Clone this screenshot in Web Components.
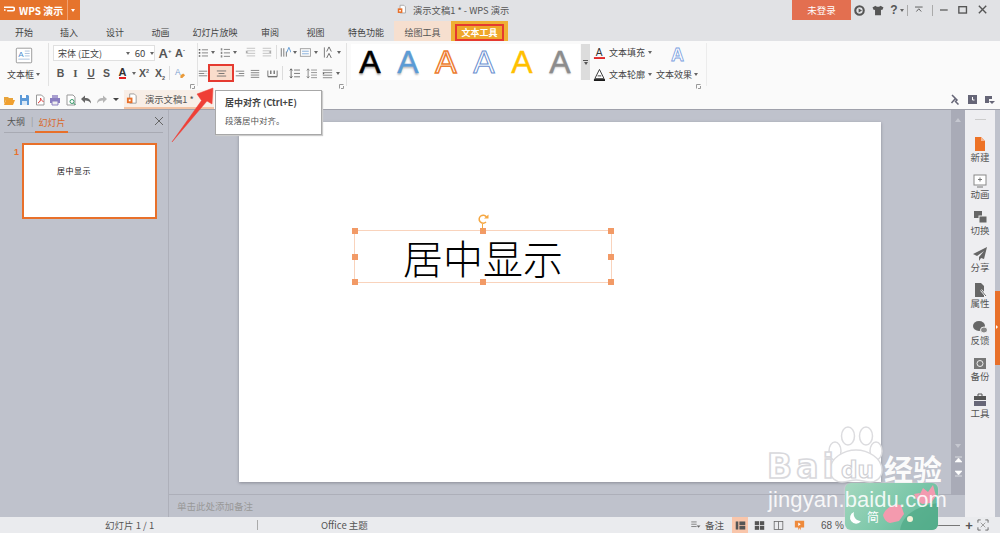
<!DOCTYPE html>
<html lang="zh"><head><meta charset="utf-8"><title>WPS 演示</title>
<style>html,body{margin:0;padding:0;overflow:hidden;background:#bfc2cc;font-family:"Noto Sans CJK SC","Liberation Sans",sans-serif}</style>
</head><body>
<wps-app></wps-app>
<script>
const F='"Noto Sans CJK SC","Liberation Sans",sans-serif';
const L=(ys,x1,x2,c='#666')=>ys.map(y=>`<path d="M${x1} ${y}H${x2}" stroke="${c}"/>`).join('');
const ICONS={
 folder:`<path d="M1 3h4l1 1h4v2H3L1 10z" fill="#e8a33a"/><path d="M3 6h9l-2 5H1z" fill="#f0a030"/>`,
 save:`<path d="M2 1h8l1 1v9H2z" fill="#5d9ad8"/><path d="M4 1h4v3H4z" fill="#fff"/><path d="M4 7h5v4H4z" fill="#dbe8f5"/>`,
 pdf:`<path d="M2.5 1h5l2.500 2.500v7.500h-7.500z" fill="#fff" stroke="#999"/><path d="M4 9c2-1 3-3 2.500-5 .5 2 1.500 3 3 3.500" fill="none" stroke="#d33"/>`,
 print:`<path d="M3 1h6v3H3z" fill="#a99fd0"/><path d="M1 4h10v5H1z" fill="#8a7fc0"/><path d="M3 7h6v4H3z" fill="#eee" stroke="#8a7fc0"/>`,
 preview:`<path d="M2 1h6l2 2v8H2z" fill="#fff" stroke="#999"/><circle cx="7" cy="7.500" r="2" fill="#fff" stroke="#3a9a6a"/><path d="M8.500 9l2 2" stroke="#3a9a6a"/>`,
 undo:`<path d="M1 5l4-3.500V4c4 0 6 2 6 5.500C10 7.500 8 6.500 5 6.500V9z" fill="#666"/>`,
 redo:`<path d="M11 5L7 1.500V4C3 4 1 6 1 9.500 2 7.500 4 6.500 7 6.500V9z" fill="#b5b5b5"/>`,
 doc:`<path d="M4 1h5l2 2v8H4z" fill="#fff" stroke="#999"/><rect x="1" y="5" width="6" height="6" fill="#e8702a"/><path d="M3 7h2v2H3z" fill="#fff"/>`,
 left:L([3.500,6.500,9.500],1,12)+`<path d="M8 6.500h4" stroke="#fafafa"/>`,
 center:L([3.500,9.500],1,12)+L([6.500],3,10),
 right:L([3.500,9.500],1,12)+L([6.500],5,12),
 just:L([2.500,5.500,8.500,11.500],1,12),
 dist:`<path d="M1 3v7h11V3" fill="none" stroke="#666"/><path d="M1 10.500h11" stroke="#666"/><path d="M4.500 3v4M8.500 3v4" stroke="#666" stroke-width="1.500"/>`,
 bullet:`<path d="M1 2h2v2H1zM1 6h2v2H1zM1 10h2v2H1z" fill="#666"/>`+L([3,7,11],5,13),
 number:`<path d="M1 1h2v3H1zM1 5.500h2v3H1zM1 10h2v3H1z" fill="#888"/>`+L([2.500,7,11.500],5,13),
 out:L([1.500,4.500,7.500,10.500],2,12,'#bbb')+`<path d="M1 4l3 2-3 2z" fill="#aaa"/>`,
 in:L([1.500,4.500,7.500,10.500],2,12,'#bbb')+`<path d="M12 4L9 6l3 2z" fill="#aaa"/>`,
 cols:`<path d="M1.500 2v10M4.500 2v10M7.500 6v6" stroke="#666"/><path d="M8 7l2.500-6 2.500 6" fill="none" stroke="#4f8fd0"/>`,
 vcenter:`<rect x="1" y="2" width="12" height="9" fill="none" stroke="#999"/><path d="M3 5h8M3 8h8" stroke="#7aa7d8"/>`,
 dir:`<path d="M1.500 1.500v11" stroke="#777"/><path d="M4 6l2.500-5L9 6M4 13l2.500-5L9 13" fill="none" stroke="#666"/>`,
 lead:`<path d="M2.500 2v10M1 3.500l1.500-2 1.500 2M1 10.500l1.500 2 1.500-2" fill="none" stroke="#555"/>`+L([3,7,11],6,13),
 before:`<path d="M2.500 2v10M1 3.500l1.500-2 1.500 2M1 10.500l1.500 2 1.500-2" fill="none" stroke="#777"/>`+L([3,6,9,12],6,13,'#888'),
 after:L([2.500,5.500,8.500,11.500],1,12,'#777')+`<path d="M1 5l2 1.500L1 8z" fill="#666"/>`,
 erase:`<text x="1" y="9" font-size="9" font-family="Liberation Sans" fill="#7ba0d0">A</text><path d="M7 9l3-2 2 2-3 3H7z" fill="#e99a3a"/>`,
 box:`<rect x="1.500" y="1.500" width="19" height="18" rx="1" fill="#fff" stroke="#888"/><text x="4" y="12" font-size="10" font-family="Liberation Sans" fill="#4f8fd0">A</text><path d="M12 5h6M12 8h6M12 11h6M4 15h14" stroke="#9db7d8"/>`,
 file:`<path d="M2 0h6l4 4v10H2z" fill="#ed7226"/><path d="M8 0v4h4" fill="#f7b690"/>`,
 anim:`<rect x="1" y="1" width="12" height="10" fill="#fff" stroke="#888"/><path d="M7 3.500v4M5 5.500h4M4 13h6" stroke="#777"/>`,
 swap:`<rect x="1" y="1" width="8" height="7" fill="#666"/><rect x="6" y="6" width="8" height="7" fill="#666" stroke="#eee"/>`,
 share:`<path d="M14 0L0 7l4 2 7-5-5 6v4l2-3 3 1z" fill="#666"/>`,
 prop:`<path d="M2 0h6l3 3v11H2z" fill="#666"/><path d="M8 7l5 6" stroke="#fff" stroke-width="2"/><path d="M8 7l5 6" stroke="#666"/>`,
 chat:`<ellipse cx="6" cy="6" rx="6" ry="5" fill="#666"/><ellipse cx="11" cy="10" rx="3.500" ry="3" fill="#888" stroke="#eee"/>`,
 backup:`<rect x="1" y="2" width="12" height="11" fill="#777"/><circle cx="7" cy="7.500" r="3" fill="none" stroke="#eee"/>`,
 tool:`<path d="M5 3V1h4v2" fill="none" stroke="#555"/><rect x="1" y="3" width="12" height="4" fill="#555"/><rect x="1" y="8" width="12" height="5" fill="#667"/>`,
 notes:L([2.500,5.500,8.500],1,8,'#666')+`<path d="M8 7h5l-2.500 3z" fill="#666"/>`,
 normal:`<rect x="1" y="1" width="3.500" height="11" fill="#555"/><rect x="6" y="1" width="8" height="5" fill="#555"/><rect x="6" y="7" width="8" height="5" fill="#555"/>`,
 sorter:`<rect x="1" y="1" width="5.500" height="5" fill="#555"/><rect x="7.500" y="1" width="5.500" height="5" fill="#555"/><rect x="1" y="7" width="5.500" height="5" fill="#555"/><rect x="7.500" y="7" width="5.500" height="5" fill="#555"/>`,
 reading:`<rect x="1.500" y="1.500" width="11" height="10" fill="none" stroke="#666"/><path d="M7 1.500v10" stroke="#666"/>`,
 play:`<path d="M1 1h11v8H8v3L6.500 9.500 5 12V9H1z" fill="#ee8a3c"/><path d="M5 3l3 2-3 2z" fill="#fff"/>`,
 fit:`<path d="M1 4V1h3M9 1h3v3M12 9v3H9M4 12H1V9" fill="none" stroke="#666"/><path d="M4 4l5 5M9 4L4 9" stroke="#999"/>`,
 store:`<circle cx="6.500" cy="6.500" r="5" fill="none" stroke="#555" stroke-width="2.500"/><path d="M5.500 4l4 2.500-4 2.500z" fill="#555"/>`,
 shirt:`<path d="M3.500 1L0 3l1.500 3L3 5.500V12h7V5.500l1.500.5L13 3 9.500 1c-1 1.500-5 1.500-6 0z" fill="#555"/>`,
 collapse:`<path d="M0 1.500h11M2 8l3.500-4L9 8" fill="none" stroke="#555" stroke-width="1.300"/>`,
 min:`<path d="M0 6.500h10" stroke="#555" stroke-width="1.600"/>`,
 max:`<rect x="1" y="2" width="9" height="7.500" fill="none" stroke="#555" stroke-width="1.600"/>`,
 close:`<path d="M2 2l8 8M10 2l-8 8" stroke="#555" stroke-width="1.500"/>`,
 x:`<path d="M1 1l8 8M9 1L1 9" stroke="#666"/>`,
 pin:`<path d="M2 1l5 5-1.500 1.500 3 3M5 5L1.500 9" stroke="#667" stroke-width="1.500" fill="none"/>`,
 clock:`<rect x="0" y="0" width="9" height="9" fill="#667"/><path d="M4.500 2v3h2" stroke="#fff" fill="none"/>`,
 qdrop:`<path d="M0 0h7v3H4v4H0z" fill="#667"/><path d="M4 5h6L7 8z" fill="#667"/>`,
 fa:`<text x="3" y="10" font-size="11" font-family="Liberation Sans" fill="#333">A</text><path d="M1 12.500h12" stroke="#e02020" stroke-width="2"/>`,
 oa:`<path d="M7 1l5 10H2z" fill="#fff" stroke="#333"/><path d="M5 8h4" stroke="#333"/><path d="M1 12.500h12" stroke="#111" stroke-width="2"/>`,
};
class WpsIcon extends HTMLElement{connectedCallback(){const w=+this.getAttribute('w')||13,h=+this.getAttribute('h')||w,vb=this.getAttribute('vb')||'0 0 13 13';
 this.attachShadow({mode:'open'}).innerHTML=`<style>:host{display:inline-flex;flex:none}svg{display:block}</style><svg width="${w}" height="${h}" viewBox="${vb}">${ICONS[this.getAttribute('name')]||''}</svg>`}}
customElements.define('wps-icon',WpsIcon);

class WpsCell extends HTMLElement{connectedCallback(){const w=this.getAttribute('w')||16;
 this.attachShadow({mode:'open'}).innerHTML=`<style>:host{display:flex;flex:none;width:${w}px;height:100%;align-items:center;justify-content:center;color:#444;white-space:nowrap}</style><slot></slot>`}}
customElements.define('wps-cell',WpsCell);

const I=(n,w,h,vb)=>`<wps-icon name="${n}"${w?` w="${w}"`:''}${h?` h="${h}"`:''}${vb?` vb="${vb}"`:''}></wps-icon>`;
const C=(w,c='',st='')=>`<wps-cell w="${w}"${st?` style="${st}"`:''}>${c}</wps-cell>`;
const D=(w=7)=>C(w,'<span style="border-top:3px solid #666;border-left:2px solid transparent;border-right:2px solid transparent"></span>');
const S=(w=1,h=15)=>`<wps-cell w="${w}"><span style="display:block;width:1px;height:${h}px;background:#dcdcdc"></span></wps-cell>`;

class WpsTitle extends HTMLElement{connectedCallback(){this.attachShadow({mode:'open'}).innerHTML=`<style>
:host{display:flex;height:21px;background:#e1e2e5;align-items:stretch;color:#555;font:9.300px ${F}}
.logo{width:80px;height:20px;background:#e6742c;color:#fff;display:flex;align-items:center;font-size:10px;font-weight:700;white-space:nowrap;flex:none}
.logo svg{margin:0 4px 0 4px;flex:none}.logo span{width:48px}.logo b{border-left:1px solid #f0a070;height:20px;width:9px;position:relative;flex:none}
.logo b::after{content:"";position:absolute;left:3px;top:9px;border-top:3px solid #fff;border-left:2px solid transparent;border-right:2px solid transparent}
.t{margin-left:317px;display:flex;align-items:center;gap:6px;width:395px;padding-bottom:2px;white-space:nowrap}
.login{width:59px;height:20px;background:#e36f50;color:#fff;display:flex;align-items:center;justify-content:center;font-size:9.500px}
.r{display:flex;align-items:center;height:20px}
.q{font:bold 12px "Liberation Sans";color:#555}.sep{width:1px;height:11px;background:#aaa}
</style>
<div class="logo"><svg width="11" height="10" viewBox="0 0 14 10"><path d="M0 1.500h11c3 0 3 4.500 0 4.500H4M0 5h2" fill="none" stroke="#fff" stroke-width="2"/></svg><span>WPS 演示</span><b></b></div>
<div class="t">${I('doc',10,11)}<span>演示文稿1 * - WPS 演示</span></div>
<div class="login">未登录</div>
<div class="r">${C(2)}
${C(13,I('store',11,11))}${C(5)}${C(13,I('shirt',12,11))}${C(6)}${C(8,'<span class="q">?</span>')}${D(7)}${C(2)}<span class="sep"></span>${C(5)}${C(13,I('collapse',11,9))}${C(6)}<span class="sep"></span>${C(7)}${C(10,I('min',10,10))}${C(8)}${C(10,I('max',11,11))}${C(10)}${C(10,I('close',12,12))}</div>`}}
customElements.define('wps-title',WpsTitle);

class WpsTabs extends HTMLElement{connectedCallback(){
 const t=[['开始',44],['插入',46],['设计',46],['动画',45],['幻灯片放映',64],['审阅',46],['视图',45],['特色功能',56]];
 this.attachShadow({mode:'open'}).innerHTML=`<style>
:host{display:flex;height:20px;background:#e1e2e5;color:#444;font:9px ${F};padding-left:2px}
span{display:flex;align-items:center;justify-content:center;flex:none;padding-top:2px;box-sizing:border-box}
.draw{background:#f6dfcf;width:57px;color:#555}
.text{background:#efb034;width:57px;padding:3px 4px 0}
.text i{font-style:normal;font-weight:700;flex:1;height:100%;display:flex;align-items:center;justify-content:center;background:#efa72a;color:#fff;border:2px solid #e53a30;box-sizing:border-box}
</style>${t.map(x=>`<span style="width:${x[1]}px">${x[0]}</span>`).join('')}<span class="draw">绘图工具</span><span class="text"><i>文本工具</i></span>`}}
customElements.define('wps-tabs',WpsTabs);

class WpsRibbon extends HTMLElement{connectedCallback(){
 const A=(st)=>`<span style="font:32px 'Liberation Sans';width:38px;text-align:center;line-height:36px;${st}">A</span>`;
 const launcher=`<svg class="la" width="5" height="5" viewBox="0 0 5 5"><path d="M.5 4.500v-4h4M4.500 2v2.500H2" fill="none" stroke="#999"/></svg>`;
 this.attachShadow({mode:'open'}).innerHTML=`<style>
:host{display:flex;height:49px;background:#fafafa;font:9px ${F};color:#444;position:relative}
.g{flex:none;display:flex;flex-direction:column;position:relative;height:100%;box-sizing:border-box;white-space:nowrap}
.row{display:flex;height:20px;align-items:center}
.sep{flex:none;width:1px;height:43px;margin-top:2px;background:#e2e2e2}
.la{position:absolute;right:2px;bottom:1px}
.combo{display:flex;height:16px;border:1px solid #e0e0e0;box-sizing:border-box;background:#fff;align-items:center;flex:none}
.boxg{align-items:center;padding-top:6px}
.let{font:bold 10px "Liberation Sans";color:#555}
.gal{flex:none;display:flex;width:229px;height:36px;background:#fff;margin:3px 0 0 4px}
.scr{flex:none;width:9px;height:36px;background:#dcdcdc;margin:3px 0 0 1px;display:flex;align-items:center;justify-content:center;flex-direction:column;gap:1px}
.scr i{display:block}
</style>
<div class="g boxg" style="width:48px">
 ${I('box',18,17,'0 0 22 21')}
 <div style="display:flex;align-items:center;height:18px;margin-top:1px">文本框${D(7)}</div>
</div><div class="sep"></div>
<div class="g" style="width:148px;padding:2px 0 0 4px">
 <div class="row">
  <div class="combo" style="width:102px">${C(71,'宋体 (正文)','justify-content:flex-start;padding-left:4px;box-sizing:border-box')}${D(6)}<span style="width:1px;height:14px;background:#e0e0e0"></span>${C(18,'60','font-size:9.500px')}${D(6)}</div>
  ${C(2)}${C(16,'<span class="let" style="font-size:13px">A<sup style="font-size:6px">+</sup></span>')}${C(14,'<span class="let" style="font-size:11px">A<sup style="font-size:6px">-</sup></span>')}
 </div>
 <div class="row">
  ${C(15,'<span class="let" style="font-size:10.500px">B</span>')}${C(15,'<i class="let" style="font-family:Liberation Serif;font-size:11px">I</i>')}${C(16,'<u class="let" style="font-size:10px">U</u>')}${C(15,'<span class="let" style="font-size:10.500px">S</span>')}
  ${C(17,'<span class="let" style="font-size:11px;border-bottom:2px solid #e02020;line-height:10px;color:#333">A</span>')}${D(6)}
  ${C(14,'<span class="let" style="font-size:10.500px">X<sup style="font-size:5.500px;line-height:0">2</sup></span>')}${C(18,'<span class="let" style="font-size:10.500px">X<sub style="font-size:5.500px;line-height:0">2</sub></span>')}
  ${S(1,14)}${C(20,I('erase',12,12))}
 </div>
 ${launcher}
</div><div class="sep"></div>
<div class="g" style="width:148px;padding:1px 0 0 0">
 <div class="row">
  ${C(10,I('bullet',10,11))}${D(10)}${C(14,I('number',10,11))}${D(6)}${C(5)}${C(14,I('out',11,11))}${C(18,I('in',11,11))}${S(3,14)}${C(14,I('cols',11,12))}${D(6)}${C(14,I('vcenter',12,11))}${D(8)}${C(2)}${C(14,I('dir',12,12))}${D(6)}
 </div>
 <div class="row" style="margin-top:1px">
  ${C(10,I('left',10,11))}
  <wps-cell w="26" style="box-sizing:border-box;height:18px;border:2px solid #e53a30;background:#f9dccb">${I('center',11,11)}</wps-cell>
  ${C(11,I('right',10,11))}${C(20,I('just',10,11))}${C(14,I('dist',11,11))}${C(3)}${S(1,14)}${C(3)}${C(16,I('lead',11,12))}${C(1)}${C(16,I('before',11,12))}${C(16,I('after',11,11))}${D(6)}
 </div>
 ${launcher}
</div><div class="sep"></div>
<div class="gal">
 ${A('color:#000;-webkit-text-stroke:.6px #000;text-shadow:0 2px 2px #aaa')}
 ${A('color:#5b9bd5;-webkit-text-stroke:.4px #5b9bd5;text-shadow:0 2px 2px #bbb')}
 ${A('color:#fff;-webkit-text-stroke:1.500px #ed7d31')}
 ${A('color:#fff;-webkit-text-stroke:1px #6a8fd0')}
 ${A('color:#ffc000;-webkit-text-stroke:.4px #ffc000')}
 ${A('color:#8c8c8c;-webkit-text-stroke:.4px #8c8c8c;text-shadow:0 1px 2px #bbb')}
</div>
<div class="scr"><i style="width:5px;height:1px;background:#555"></i><i style="border-top:3px solid #555;border-left:2.500px solid transparent;border-right:2.500px solid transparent"></i></div>
<div class="g" style="width:66px;padding:1px 0 0 3px">
 <div class="row">${I('fa',12,13)}<span style="margin-left:4px;width:36px">文本填充</span>${D(9)}</div>
 <div class="row" style="margin-top:2px">${I('oa',12,13)}<span style="margin-left:4px;width:36px">文本轮廓</span>${D(9)}</div>
</div>
<div class="g" style="width:47px;align-items:center;padding:5px 4px 0 0">
 <span style="font:bold 18px 'Liberation Sans';color:#fff;-webkit-text-stroke:.8px #7b9fe0;line-height:18px">A</span>
 <div class="row" style="margin-top:0">文本效果${D(7)}</div>
 ${launcher}
</div><div class="sep" style="margin-left:3px;background:#ececec"></div>`}}
customElements.define('wps-ribbon',WpsRibbon);

class WpsQuick extends HTMLElement{connectedCallback(){
 const names=['folder','save','pdf','print','preview','undo','redo'];
 this.attachShadow({mode:'open'}).innerHTML=`<style>
:host{display:flex;height:19px;background:#fafafa;align-items:center;font:9.300px ${F};color:#555}
.doc{display:flex;align-items:center;height:19px;width:90px;box-sizing:border-box;background:#f8eee7;border-bottom:2px solid #f3c3a4;gap:7px;padding-left:2px;flex:none}
.r{margin-left:auto;display:flex;align-items:center;gap:8px;padding-right:5px}
</style>${C(1)}${names.map(n=>C(15.500,I(n,12,12,'0 0 12 12'))).join('')}${C(2)}${C(9,'<span style="border-top:3px solid #444;border-left:3px solid transparent;border-right:3px solid transparent"></span>')}${C(3.500)}
<div class="doc">${I('doc',12,12)}<span>演示文稿1 *</span></div>
<div class="r">${I('pin',10,11,'0 0 10 11')}${I('clock',9,9,'0 0 9 9')}${I('qdrop',10,8,'0 0 10 8')}</div>`}}
customElements.define('wps-quick',WpsQuick);

class WpsSide extends HTMLElement{connectedCallback(){this.attachShadow({mode:'open'}).innerHTML=`<style>
:host{display:block;width:168px;flex:none;background:#bfc2cc;border-right:1px solid #aeb0ba;font:9px ${F};color:#555}
.tabs{display:flex;align-items:center;height:23px;margin:0 5px 0 4px;border-bottom:1px solid #a8aab3;box-sizing:border-box}
.o{color:#d9692a;height:23px;line-height:26px;border-bottom:2px solid #e8702a;padding:0 3px;margin-left:2px;box-sizing:border-box}
.th{display:flex;margin-top:10px;padding-left:14px}
.n{width:8px;font:bold 9px "Liberation Sans";color:#e8702a;padding-top:4px}
.t{width:135px;height:76px;box-sizing:border-box;border:2px solid #e8702a;background:#fff;font:8px ${F};color:#111;padding:20px 0 0 33px;letter-spacing:.5px}
</style><div class="tabs"><span style="padding-left:3px">大纲</span><span style="margin-left:6px;color:#999">|</span><span class="o">幻灯片</span><span style="margin-left:auto;margin-right:-1px;margin-top:3px">${I('x',10,10,'0 0 10 10')}</span></div>
<div class="th"><div class="n">1</div><div class="t">居中显示</div></div>`}}
customElements.define('wps-side',WpsSide);

class WpsSlide extends HTMLElement{connectedCallback(){
 const h=[[0,0],[50,0],[100,0],[0,50],[100,50],[0,100],[50,100],[100,100]];
 this.attachShadow({mode:'open'}).innerHTML=`<style>
:host{display:block;width:642px;height:360px;background:#fff;position:relative;box-shadow:0 1px 3px #8a8c96;flex:none}
.box{position:absolute;left:115px;top:108px;width:258px;height:53px;border:1px solid #f9d3bc;box-sizing:border-box;display:flex;align-items:center;justify-content:center;font:300 40px ${F};color:#000;line-height:1}
i{position:absolute;width:6px;height:6px;background:#f29a66;margin:-3px 0 0 -3px}
svg{position:absolute;left:122px;top:-18px}
</style><div class="box">居中显示${h.map(p=>`<i style="left:${p[0]}%;top:${p[1]}%"></i>`).join('')}
<svg width="12" height="18" viewBox="0 0 12 18"><path d="M9.500 4A4 4 0 1 0 9 9" fill="none" stroke="#f5a742" stroke-width="1.500"/><path d="M7 5.500h4.500V1.500z" fill="#f5a742"/><path d="M5.500 11v7" stroke="#f5a742"/></svg></div>`}}
customElements.define('wps-slide',WpsSlide);

class WpsCanvas extends HTMLElement{connectedCallback(){this.attachShadow({mode:'open'}).innerHTML=`<style>
:host{flex:1;display:flex;flex-direction:column;background:#bfc2cc;min-width:0}
.area{flex:1;padding:12px 0 0 70px;min-height:0}
.notes{height:23px;border-top:1px solid #adafb9;font:9.500px ${F};color:#999;display:flex;align-items:center;padding-left:8px;box-sizing:border-box}
</style><div class="area"><wps-slide></wps-slide></div><div class="notes">单击此处添加备注</div>`}}
customElements.define('wps-canvas',WpsCanvas);

class WpsScroll extends HTMLElement{connectedCallback(){this.attachShadow({mode:'open'}).innerHTML=`<style>
:host{display:flex;flex-direction:column;align-items:center;width:14px;flex:none;background:#a9abb7;height:385px}
i{display:block;border-left:3.500px solid transparent;border-right:3.500px solid transparent}
.w{margin-top:8px;border-bottom:4px solid #c5c7d0}.d{border-top:4px solid #c5c7d0;margin-top:322px}
svg{flex:none}
</style><i class="w"></i><i class="d"></i>
<svg style="margin-top:8px" width="7" height="7" viewBox="0 0 7 7"><path d="M0 1h7M3.500 2L0 6h7z" fill="#fff" stroke="#fff" stroke-width=".6"/></svg>
<svg style="margin-top:7px" width="7" height="7" viewBox="0 0 7 7"><path d="M0 6h7M3.500 5L0 1h7z" fill="#fff" stroke="#fff" stroke-width=".6"/></svg>`}}
customElements.define('wps-scroll',WpsScroll);

class WpsRail extends HTMLElement{connectedCallback(){
 const it=[['file','新建'],['anim','动画'],['swap','切换'],['share','分享'],['prop','属性'],['chat','反馈'],['backup','备份'],['tool','工具']];
 this.attachShadow({mode:'open'}).innerHTML=`<style>
:host{display:flex;flex-direction:column;align-items:center;width:30px;flex:none;background:#eeeef1;font:9.500px ${F};color:#555;padding-top:9px;box-sizing:border-box}
.d{width:11px;height:1px;background:#ccc;margin-bottom:17px}
.i{height:36.500px;display:flex;flex-direction:column;align-items:center;line-height:13px}
</style><div class="d"></div>${it.map(x=>`<div class="i">${I(x[0],14,14,'0 0 14 14')}<span>${x[1]}</span></div>`).join('')}`}}
customElements.define('wps-rail',WpsRail);

class WpsStatus extends HTMLElement{connectedCallback(){this.attachShadow({mode:'open'}).innerHTML=`<style>
:host{display:flex;height:16px;background:#eaebee;align-items:center;font:9.500px ${F};color:#555;flex:none}
.s{width:1px;height:10px;background:#aaa;flex:none}span{flex:none}
</style>${C(105)}<span style="width:152px">幻灯片 1 / 1</span><span class="s"></span>${C(63)}<span style="width:369px">Office 主题</span>
${I('notes',11,10)}${C(4)}<span style="width:27px">备注</span>
<wps-cell w="16" style="background:#f9c6ab;height:16px">${I('normal',11,11,'0 0 15 13')}</wps-cell>${C(5)}${C(12,I('sorter',11,11,'0 0 14 13'))}${C(7)}${C(12,I('reading',11,11,'0 0 14 13'))}${C(9)}${C(12,I('play',11,11))}${C(16)}<span style="width:30px;font-family:'Liberation Sans',sans-serif;font-size:10px">68 %</span>
<span style="margin-left:79px;width:30px;height:1px;background:#777"></span>${C(4)}<span style="font:bold 13px 'Liberation Sans';width:10px;text-align:center">+</span>${C(3)}${I('fit',12,12)}`}}
customElements.define('wps-status',WpsStatus);

class WpsTooltip extends HTMLElement{connectedCallback(){this.attachShadow({mode:'open'}).innerHTML=`<style>
:host{position:absolute;left:215px;top:90px;width:107px;height:45px;box-sizing:border-box;background:#fff;border:1px solid #a8a8a8;box-shadow:1px 1px 1px #ccc;font:9px ${F};color:#555;padding:5px 9px;z-index:5;white-space:nowrap}
b{display:block;font-weight:700;line-height:13px;color:#444}p{margin:5px 0 0;line-height:13px;font-size:8.500px}
</style><b>居中对齐 (Ctrl+E)</b><p>段落居中对齐。</p>`}}
customElements.define('wps-tooltip',WpsTooltip);

class WpsArrow extends HTMLElement{connectedCallback(){this.attachShadow({mode:'open'}).innerHTML=`<style>:host{position:absolute;left:168px;top:84px;z-index:6;display:block}</style>
<svg width="50" height="62" viewBox="0 0 50 62"><path d="M4 58L33.500 16.500 29 10 45 4l-1 16-5-3L4 58z" fill="#ef3f36" stroke="#ef3f36" stroke-width=".5" stroke-linejoin="round"/></svg>`}}
customElements.define('wps-arrow',WpsArrow);

class WpsMark extends HTMLElement{connectedCallback(){this.attachShadow({mode:'open'}).innerHTML=`<style>
:host{position:absolute;left:760px;top:420px;width:240px;height:113px;display:block;z-index:7;pointer-events:none}
.w{position:absolute;color:#fff}
.b{left:7px;top:23px;font:bold 33px "DejaVu Sans";color:#fff;-webkit-text-stroke:1.700px #d8d8dc;letter-spacing:4px;line-height:48px}
.du{left:81px;top:38px;font:bold 23px "DejaVu Sans";color:#fff;-webkit-text-stroke:1.200px #cfcfd4;line-height:24px}
.jy{left:124px;top:31px;font:700 29px ${F};color:rgba(255,255,255,.95);line-height:34px}
.url{left:8px;top:69px;font:22px "Liberation Sans";color:rgba(255,255,255,.88);line-height:22px;letter-spacing:.1px;z-index:3}
.card{position:absolute;left:85px;top:63px;width:93px;height:47px;border-radius:6px;background:linear-gradient(135deg,#a5d8bf,#7cc7a9 55%,#5eb396);overflow:hidden;box-shadow:0 0 2px #ddd}
.jian{position:absolute;left:22px;top:27px;font:12px ${F};color:#fff;line-height:14px}
.card svg{position:absolute;left:0;top:0}
</style>
<svg class="w" style="left:0;top:0" width="140" height="70" viewBox="0 0 140 70" fill="#fff" stroke="#dcdcdf" stroke-width="1.500">
 <ellipse cx="75" cy="31" rx="6" ry="9"/><ellipse cx="88" cy="16" rx="6.500" ry="9"/><ellipse cx="106" cy="16" rx="6.500" ry="9"/><ellipse cx="116" cy="31" rx="6" ry="9"/>
 <path d="M70 50C70 38 84 30 96 30s26 8 26 20c0 8-6 12-12 12-5 0-9-2-14-2s-9 2-14 2c-6 0-12-4-12-12z"/>
</svg>
<div class="w b">Bai</div><div class="w du">du</div>
<div class="w jy">经验</div>
<div class="card">
 <svg width="93" height="47" viewBox="0 0 93 47"><path d="M55 47c2-14 15-24 38-27v27z" fill="#4ea986" opacity=".7"/><path d="M72 17l6-12 5 4 5-7 3 11-5 7-9 1zM72 17l-3-6 6-1z" fill="#f29bb0"/><path d="M38 32c3-8 12-12 18-10l3 9-5 7-9 2c-4-1-6-4-7-8z" fill="#f49aae"/><circle cx="65" cy="36" r="3" fill="#f5f2d8"/><path d="M9 29a6 6 0 1 0 7 9 7 7 0 0 1-7-9z" fill="#fff"/></svg>
 <div class="jian">简</div>
</div>
<div class="w url">jingyan.baidu.com</div>`}}
customElements.define('wps-mark',WpsMark);

class WpsApp extends HTMLElement{connectedCallback(){this.attachShadow({mode:'open'}).innerHTML=`<style>
:host{display:flex;flex-direction:column;width:1000px;height:533px;position:relative;overflow:hidden}
.work{flex:1;display:flex;min-height:0}
.edge{width:5px;flex:none;background:#bfc2cc;display:flex;flex-direction:column}
.edge i{display:block;height:74px;margin-top:181px;background:#e8702a;position:relative}
.edge i::after{content:"";position:absolute;left:1px;top:34px;border-left:2px solid #fff;border-top:2px solid transparent;border-bottom:2px solid transparent}
.sh{height:1px;background:#9fa1ab;flex:none}
</style>
<wps-title></wps-title><wps-tabs></wps-tabs><wps-ribbon></wps-ribbon><wps-quick></wps-quick><div class="sh"></div>
<div class="work"><wps-side></wps-side><wps-canvas></wps-canvas><wps-scroll></wps-scroll><wps-rail></wps-rail><div class="edge"><i></i></div></div>
<wps-status></wps-status><wps-tooltip></wps-tooltip><wps-arrow></wps-arrow><wps-mark></wps-mark>`}}
customElements.define('wps-app',WpsApp);
</script>
</body></html>
